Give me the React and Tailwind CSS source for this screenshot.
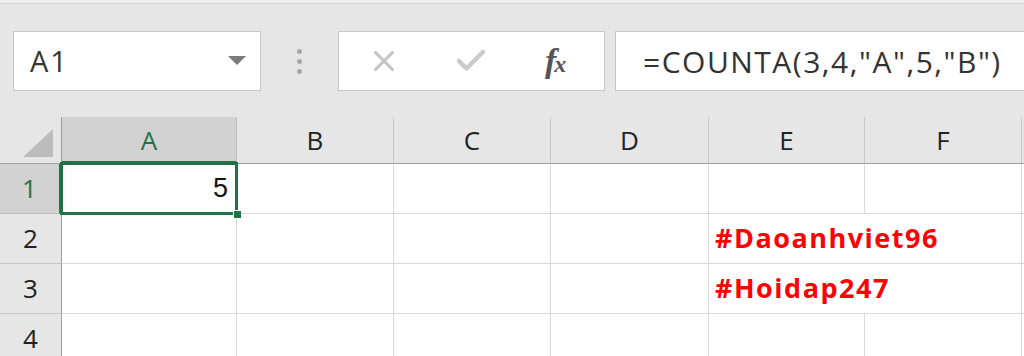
import { X, Check } from 'lucide-react'

const COLS = ['A', 'B', 'C', 'D', 'E', 'F', '']
const ROWS = [1, 2, 3, 4]

export default function App() {
  return (
    <div className="w-[1024px] h-[356px] overflow-hidden bg-[#e6e6e6] font-['Open_Sans',sans-serif]">
      {/* top strip */}
      <div className="h-[4px] bg-[#efefef] border-b border-[#d6d6d6]" />

      {/* formula bar */}
      <div className="flex items-center h-[113px] pl-[13px] pt-[27px] pb-[26px]">
        <div className="flex items-center justify-between w-[248px] h-[60px] bg-white border border-[#c6c6c6] pl-[16px] pr-[14px]">
          <span className="text-[29px] text-[#333] tracking-[2px]">A1</span>
          <svg width="18" height="10" viewBox="0 0 18 10">
            <path d="M0 0 L18 0 L9 9 Z" fill="#7a7a7a" />
          </svg>
        </div>
        <div className="flex flex-col gap-[5px] items-center w-[77px]">
          <span className="w-[5px] h-[5px] rounded-full bg-[#a8a8a8]" />
          <span className="w-[5px] h-[5px] rounded-full bg-[#a8a8a8]" />
          <span className="w-[5px] h-[5px] rounded-full bg-[#a8a8a8]" />
        </div>
        <div className="flex items-center w-[267px] h-[60px] bg-white border border-[#c6c6c6]">
          <X size={34} strokeWidth={2.2} className="text-[#c4c4c4] ml-[28px]" />
          <Check size={36} strokeWidth={3} className="text-[#cacaca] ml-[52px]" />
          <span className="ml-[56px] font-['Liberation_Serif',serif] italic font-bold text-[34px] text-[#555] leading-none tracking-[-2px]">
            f<span className="text-[24px]">x</span>
          </span>
        </div>
        <div className="flex items-center flex-1 h-[60px] ml-[10px] bg-white border border-[#c6c6c6] border-r-0 pl-[27px]">
          <span className="text-[30px] text-[#333] whitespace-nowrap tracking-[1.5px]">=COUNTA(3,4,"A",5,"B")</span>
        </div>
      </div>

      {/* sheet */}
      <div className="grid grid-cols-[62px_175px_157px_157px_158px_156px_157px_100px] grid-rows-[47px_50px_50px_50px_50px] bg-white">
        {/* corner */}
        <div className="relative bg-[#e6e6e6] border-r border-b border-[#9f9f9f]">
          <svg className="absolute right-[8px] bottom-[6px]" width="30" height="28" viewBox="0 0 30 28">
            <path d="M30 0 L30 28 L0 28 Z" fill="#bcbcbc" />
          </svg>
        </div>
        {COLS.map((c, i) => (
          <div
            key={i}
            className={
              c === 'A'
                ? 'flex items-center justify-center bg-[#d2d2d2] border-r border-[#bdbdbd] border-b-[3px] border-b-[#217346] text-[#217346] text-[26px] pt-[3px]'
                : 'flex items-center justify-center bg-[#e6e6e6] border-r border-[#c8c8c8] border-b border-b-[#9f9f9f] text-[#222] text-[26px]'
            }
          >
            {c}
          </div>
        ))}

        {ROWS.map(r => (
          <Row key={r} r={r} />
        ))}
      </div>
    </div>
  )
}

function Row({ r }) {
  const red = r === 2 ? '#Daoanhviet96' : r === 3 ? '#Hoidap247' : null
  return (
    <>
      <div
        className={
          r === 1
            ? 'flex items-center justify-center bg-[#d2d2d2] border-r-[3px] border-r-[#217346] border-b border-[#bdbdbd] text-[#217346] text-[26px]'
            : 'flex items-center justify-center bg-[#e6e6e6] border-r border-r-[#9f9f9f] border-b border-[#c8c8c8] text-[#222] text-[26px]'
        }
      >
        {r}
      </div>
      {COLS.map((c, i) => {
        const noRight = c === 'E' && red
        return (
          <div
            key={i}
            className={`relative border-b border-[#d9d9d9] ${noRight ? '' : 'border-r'}`}
          >
            {c === 'A' && r === 1 && (
              <>
                <div className="absolute -left-[2px] -top-[2px] -right-[2px] -bottom-[2px] border-[3px] border-[#217346] z-10" />
                <div className="absolute -right-[6px] -bottom-[6px] w-[9px] h-[9px] bg-[#217346] border border-white z-20" />
                <div className="flex items-center justify-end h-full pr-[8px] text-[27px] text-[#111] font-['Liberation_Sans',sans-serif]">
                  5
                </div>
              </>
            )}
            {c === 'E' && red && (
              <div className="absolute left-[6px] top-0 h-full flex items-center whitespace-nowrap z-10 text-[27px] font-bold text-[#ff0000] tracking-[1.5px]">
                {red}
              </div>
            )}
          </div>
        )
      })}
    </>
  )
}
